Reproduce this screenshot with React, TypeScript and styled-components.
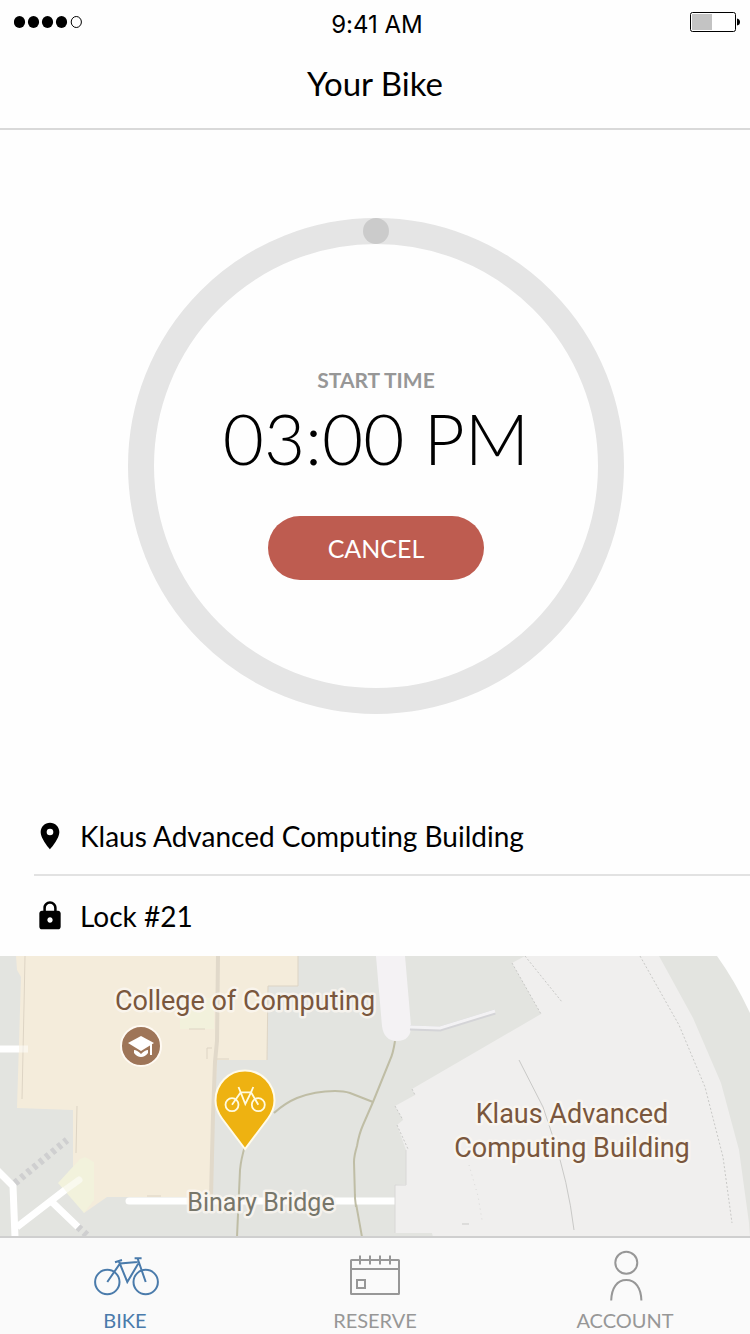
import React from "react";
import styled, { createGlobalStyle } from "styled-components";

const GlobalStyle = createGlobalStyle`
  * { box-sizing: border-box; }
  body {
    margin: 0;
    background: #fefefe;
    color: #000;
    font-family: Lato, "Liberation Sans", sans-serif;
    font-variant-ligatures: none;
  }
`;

const Screen = styled.div`
  display: flex;
  flex-direction: column;
  min-height: 100vh;
`;

const Header = styled.header`
  border-bottom: 2px solid #d9d9d9;
`;

const StatusBar = styled.div`
  display: grid;
  grid-template-columns: 1fr auto 1fr;
  align-items: start;
  padding: 12px 10px 0 14px;
`;

const Clock = styled.time`
  font-family: Inter, "Liberation Sans", sans-serif;
  font-size: 24px;
  line-height: 26px;
`;

const BatteryIcon = styled.svg`
  justify-self: end;
`;

const Title = styled.h1`
  margin: 0;
  padding: 25px 0;
  font-size: 33px;
  font-weight: 400;
  line-height: 40px;
  text-align: center;
`;

const Main = styled.main`
  flex: 1;
  display: flex;
  flex-direction: column;
`;

const DialSection = styled.section`
  display: flex;
  justify-content: center;
  padding: 88px 0 82px 2px;
`;

const Dial = styled.div`
  position: relative;
  display: flex;
  flex-direction: column;
  align-items: center;
  width: 496px;
  height: 496px;
  padding-top: 122px;
  border: 26px solid #e5e5e5;
  border-radius: 50%;
`;

const Knob = styled.span`
  position: absolute;
  top: -26px;
  left: 50%;
  width: 26px;
  height: 26px;
  margin-left: -13px;
  border-radius: 50%;
  background: #cbcbcb;
`;

const DialLabel = styled.span`
  margin-bottom: 8px;
  color: #979797;
  font-size: 21px;
  font-weight: 700;
  line-height: 28px;
`;

const DialTime = styled.time`
  margin-bottom: 42px;
  font-size: 71px;
  font-weight: 300;
  line-height: 72px;
  white-space: nowrap;
`;

const CancelButton = styled.button`
  width: 216px;
  height: 64px;
  border: 0;
  border-radius: 32px;
  background: #be5c50;
  color: #fff;
  font: 400 25px/32px Lato, "Liberation Sans", sans-serif;
  cursor: pointer;
`;

const Details = styled.ul`
  margin: 0;
  padding: 0 0 0 34px;
  list-style: none;
`;

const DetailRow = styled.li`
  display: flex;
  align-items: center;
  gap: 14px;
  height: 80px;
  font-size: 28px;
  line-height: 32px;

  &:not(:last-child) {
    box-shadow: inset 0 -2px #e2e2e2;
  }
`;

const MapArea = styled.section`
  flex: 1;
  display: flex;
  min-height: 280px;
`;

const MapDrawing = styled.svg`
  flex: 1;
  width: 100%;
  height: auto;
  min-height: 280px;
  background: #e3e4e0;
`;

const MapLabel = styled.text<{ $muted?: boolean }>`
  fill: ${(p) => (p.$muted ? "#77766a" : "#7a573d")};
  stroke: #fbf7f1;
  stroke-width: 5px;
  stroke-opacity: 0.8;
  stroke-linejoin: round;
  paint-order: stroke;
  font-family: Roboto, "Liberation Sans", sans-serif;
  font-size: ${(p) => (p.$muted ? 25 : 27)}px;
  text-anchor: middle;
`;

const TabBar = styled.nav`
  display: grid;
  grid-template-columns: repeat(3, 1fr);
  border-top: 2px solid #cfcfcf;
  background: #fafafa;
`;

const Tab = styled.a<{ $active?: boolean }>`
  display: flex;
  flex-direction: column;
  align-items: center;
  gap: 6px;
  padding: 12px 0 2px;
  color: ${(p) => (p.$active ? "#4a7bab" : "#979797")};
  font-size: 20px;
  line-height: 24px;
  text-decoration: none;
`;

const TabIcon = styled.svg`
  width: 70px;
  height: 52px;
  fill: none;
  stroke: currentColor;
  stroke-width: 2px;
`;

const Signal = () => (
  <svg width="70" height="20" viewBox="0 0 70 20" aria-label="Signal strength">
    {[6, 20, 34, 48].map((x) => (
      <ellipse key={x} cx={x - 0.5} cy="10" rx="5.6" ry="6" />
    ))}
    <ellipse cx="62.3" cy="10" rx="5.1" ry="5.5" fill="none" stroke="#000" />
  </svg>
);

const Battery = () => (
  <BatteryIcon width="50" height="20" viewBox="0 0 50 20" aria-label="Battery">
    <rect x="0.5" y="0.5" width="45" height="19" rx="2" fill="#fff" stroke="#000" />
    <rect x="2" y="2" width="20" height="16" fill="#c3c3c3" />
    <path d="M47 6.5 Q50 7 50 10 Q50 13 47 13.5Z" />
  </BatteryIcon>
);

const PlaceIcon = () => (
  <svg width="32" height="32" viewBox="0 0 24 24" aria-hidden="true">
    <path d="M12 2C8.13 2 5 5.13 5 9c0 5.25 7 13 7 13s7-7.750 7-13c0-3.870-3.130-7-7-7zm0 9.500a2.500 2.500 0 1 1 0-5 2.500 2.500 0 0 1 0 5z" />
  </svg>
);

const LockIcon = () => (
  <svg width="32" height="32" viewBox="0 0 24 24" aria-hidden="true">
    <path d="M18 8h-1V6c0-2.760-2.240-5-5-5S7 3.240 7 6v2H6c-1.100 0-2 .9-2 2v10c0 1.100.9 2 2 2h12c1.100 0 2-.9 2-2V10c0-1.100-.9-2-2-2zm-6 9c-1.100 0-2-.9-2-2s.9-2 2-2 2 .9 2 2-.9 2-2 2zm3.100-9H8.900V6c0-1.710 1.390-3.100 3.100-3.100s3.100 1.390 3.100 3.100v2z" />
  </svg>
);

const BikeIcon = () => (
  <TabIcon viewBox="0 0 70 52" aria-hidden="true">
    <circle cx="17.3" cy="32" r="12.2" />
    <circle cx="55.7" cy="32" r="12.2" />
    <path d="M17.3 32 30 13.5 47.600 12M25 12.200 32 10M28.800 11 37.300 32 48.300 13.500M44.600 8.200H51.600M47.600 8.500 55.700 32" />
  </TabIcon>
);

const CalendarIcon = () => (
  <TabIcon viewBox="0 0 70 52" aria-hidden="true">
    <rect x="11" y="10" width="48" height="34" rx="0.5" />
    <path d="M11 19H59M20 5.500V14.500M30 5.500V14.500M40 5.500V14.500M50 5.500V14.500" />
    <rect x="17" y="30" width="8" height="8" />
  </TabIcon>
);

const PersonIcon = () => (
  <TabIcon viewBox="0 0 70 52" aria-hidden="true">
    <circle cx="36.300" cy="12.700" r="11" />
    <path d="M21.200 50.500C21.500 38 27 30 36.300 30S51.100 38 51.400 50.500" />
  </TabIcon>
);

const CampusMap = () => (
  <MapDrawing viewBox="0 0 750 280" preserveAspectRatio="xMidYMid slice" role="img" aria-label="Campus map">
    {/* open ground beyond the lawn */}
    <path d="M717 0Q735 25 750 57V0Z" fill="#fefefe" />

    {/* footpaths */}
    <g fill="none" stroke="#bfbda5" strokeWidth="2">
      <path d="M395 85Q393 98 390 104L373 146 363 169Q359 178 357 190 354 200 354 206L355 242 362 281" />
      <path d="M274 157Q285 147 297 142 315 135 335 135 344 135 350 137L373 146" />
      <path d="M245 190Q241 203 240 214L237 281" />
    </g>

    {/* streets */}
    <path d="M376 0H405L411 70Q411 85 397 85 384 85 382 70Z" fill="#f4f2f4" />
    <path d="M410 72 440 73 495 56" fill="none" stroke="#d4d4d7" strokeWidth="5" />
    <path d="M410 71 440 72 495 55" fill="none" stroke="#f3f2f4" strokeWidth="3" />

    {/* College of Computing */}
    <path d="M16 0H298V30H268L267 104H217L210 241H107L84 257 73 222V154L17 152 21 21 17 14Z" fill="#f4ecdb" />
    <path d="M218 0 217 85 215 106 213 160 211 241" fill="none" stroke="#e1d9ca" strokeWidth="4" />
    <path d="M180 60 204 42H214V73H180Z" fill="#f2f1dc" />
    <path d="M25 0 24 50 22 143M77 150 76 197M189 73H205M147 240H161M207 103V92H212M217 103H229M298 0V30H268L267 104" fill="none" stroke="#ddd4c4" />
    <path d="M58 227 80 203 85 201 94 206V244L84 257Z" fill="#f2f2dc" />

    {/* walkways on the west side */}
    <g fill="none" stroke="#fff" strokeWidth="7">
      <path d="M0 93H19" />
      <path d="M19 93H28" strokeOpacity="0.5" />
      <path d="M-4 213 13 230 15 281M17 271 65 234M53 247 78 271" />
      <path d="M65 234 79 224" strokeOpacity="0.5" strokeLinecap="round" />
      <path d="M129 245H395" strokeLinecap="round" />
    </g>
    <path d="M15 227 67 184" stroke="#cfcfd0" strokeWidth="7" strokeDasharray="4 4" />
    <path d="M78 271 89 281" stroke="#cfcfd0" strokeWidth="7" strokeDasharray="4 4" />
    <path d="M355 238V242L356 251" fill="none" stroke="#bfbda5" strokeWidth="2" />

    {/* Klaus Advanced Computing Building */}
    <path d="M512 7 525 0H659L693 62 721 127 739 194 749 267 750 281H433L432 277H395V229L406 228V194L397 169 403 164 395 150 415 139 412 133 541 58Z" fill="#f0efee" />
    <g fill="none" stroke="#c9c9c7">
      <path d="M519 104 543 151 553 181Q568 225 574 274" />
      <path d="M395 277V229H406V194" stroke="#d8d8d6" />
      <path d="M640 0 679 69 705 131 723 201 732 267M525 0 562 46M512 7 541 58M412 133 415 139M395 150 403 164M397 169 408 193" strokeDasharray="2 2" />
      <path d="M469 209 478 240 482 264" stroke="#dadad8" strokeDasharray="1 4" />
      <path d="M462 268H469" />
    </g>

    <MapLabel x="245" y="54">College of Computing</MapLabel>
    <MapLabel x="572" y="167">Klaus Advanced</MapLabel>
    <MapLabel x="572" y="201">Computing Building</MapLabel>
    <MapLabel x="261" y="255" $muted>Binary Bridge</MapLabel>

    {/* campus marker */}
    <circle cx="141" cy="90" r="20" fill="#9e7558" stroke="#fffaf3" strokeWidth="2" />
    <path d="M128 87 141 80 154 87 141 95Z" fill="#fff" />
    <path d="M134 94Q137 94 141 98 145 94 148 94V97Q145 101 141 101T134 97ZM150 88H152V99H150Z" fill="#fff" />

    {/* bike pin */}
    <path d="M245 193 222 162.500C218 157 215.500 151 215.500 144.500A29.500 30 0 0 1 274.500 144.500C274.500 151 272 157 268 162.500Z" fill="#eeb211" stroke="#fffbea" strokeWidth="2" />
    <g fill="none" stroke="#fffbe0" strokeWidth="1.8">
      <circle cx="232" cy="148.700" r="6.500" />
      <circle cx="258.300" cy="148.700" r="6.500" />
      <path d="M232 148.700 240.700 136.300 238.500 131M240.700 136.300 245.300 148 251 136.300H240.700M258.300 148.700 251 136.300 253.300 131" />
    </g>
  </MapDrawing>
);

const tabs = [
  { label: "BIKE", Icon: BikeIcon, active: true },
  { label: "RESERVE", Icon: CalendarIcon, active: false },
  { label: "ACCOUNT", Icon: PersonIcon, active: false },
];

export default function App() {
  return (
    <>
      <GlobalStyle />
      <Screen>
        <Header>
          <StatusBar>
            <Signal />
            <Clock>9:41 AM</Clock>
            <Battery />
          </StatusBar>
          <Title>Your Bike</Title>
        </Header>
        <Main>
          <DialSection>
            <Dial>
              <Knob />
              <DialLabel>START TIME</DialLabel>
              <DialTime>03:00 PM</DialTime>
              <CancelButton type="button">CANCEL</CancelButton>
            </Dial>
          </DialSection>
          <Details>
            <DetailRow>
              <PlaceIcon />
              Klaus Advanced Computing Building
            </DetailRow>
            <DetailRow>
              <LockIcon />
              Lock #21
            </DetailRow>
          </Details>
          <MapArea>
            <CampusMap />
          </MapArea>
        </Main>
        <TabBar>
          {tabs.map(({ label, Icon, active }) => (
            <Tab key={label} href={"#" + label.toLowerCase()} $active={active} aria-current={active ? "page" : undefined}>
              <Icon />
              {label}
            </Tab>
          ))}
        </TabBar>
      </Screen>
    </>
  );
}
